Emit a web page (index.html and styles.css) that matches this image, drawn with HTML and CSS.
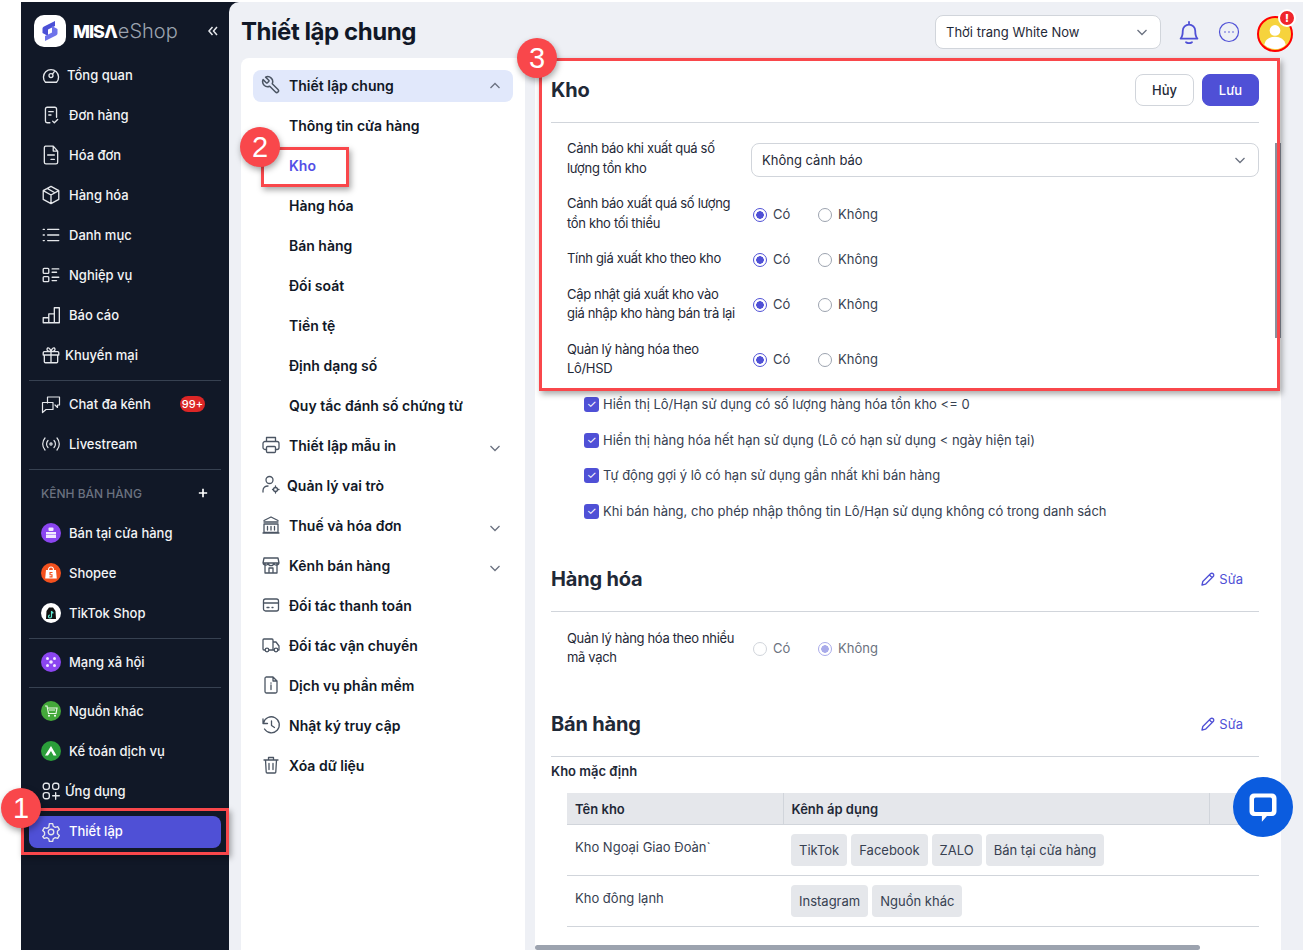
FILE: index.html
```html
<!DOCTYPE html>
<html lang="vi">
<head>
<meta charset="utf-8">
<title>MISA eShop - Thiết lập chung</title>
<link rel="stylesheet" href="styles.css">
</head>
<body>
<div class="app">
  <aside class="sidebar">
    <div class="brand">
      <div class="brand-mark">
        <svg viewBox="0 0 32 32"><path class="mark-a" d="M21 6 10 11.500c-1 .6-1.500 1.300-1.500 2.300V18l5.500 3v-6.500l7-3.500z"/><path class="mark-b" d="M11 26l11-5.500c1-.6 1.500-1.300 1.500-2.300V14L18 11v6.500L11 21z"/></svg>
      </div>
      <div class="brand-name"><b>MISΛ</b><span>eShop</span></div>
      <svg class="collapse" viewBox="0 0 12 12"><path d="M5.500 2 2 6l3.500 4M10 2 6.500 6l3.500 4"/></svg>
    </div>
    <nav>
      <a class="row gap-6"><svg class="i" viewBox="0 0 18 18"><path d="M4 15.500h10a6.800 6.800 0 1 0-10 0z"/><circle cx="9" cy="9.500" r="1.800"/><path d="M10.500 8l1.500-2"/></svg>Tổng quan</a>
      <a class="row"><svg class="i" viewBox="0 0 18 18"><path d="M8 16H5.500A1.500 1.500 0 0 1 4 14.500v-11A1.500 1.500 0 0 1 5.500 2h7A1.500 1.500 0 0 1 14 3.500V11M7 6h4M7 9h2M10.500 14.500l1.500 1.500 3-3"/></svg>Đơn hàng</a>
      <a class="row"><svg class="i" viewBox="0 0 18 18"><path d="M4 1h7l4 4.500v10a1.500 1.500 0 0 1-1.500 1.500h-9A1.500 1.500 0 0 1 3 15.500V2.500A1.500 1.500 0 0 1 4 1zM11 1v4.500h4M6 9h6M9 13h3"/></svg>Hóa đơn</a>
      <a class="row"><svg class="i" viewBox="0 0 18 18"><path d="M9 1.200 16 5v8l-7 3.800L2 13V5zM2 5l7 4 7-4M9 9v7.800M5.500 3.100 12.500 7"/></svg>Hàng hóa</a>
      <a class="row"><svg class="i" viewBox="0 0 18 18"><path d="M6 4h10M6 9h10M6 14h10M2 4h1M2 9h1M2 14h1"/></svg>Danh mục</a>
      <a class="row"><svg class="i" viewBox="0 0 18 18"><rect x="2" y="3" width="5" height="4.500" rx=".8"/><rect x="2" y="10.500" width="5" height="4.500" rx=".8"/><path d="M10 3.500h6M10 6.500h4M10 11h6M10 14h4"/></svg>Nghiệp vụ</a>
      <a class="row"><svg class="i" viewBox="0 0 18 18"><path d="M2 16h14.500V2.500h-4.500V16M7 16V8h5M2 16v-4.500h5"/></svg>Báo cáo</a>
      <a class="row gap-4"><svg class="i" viewBox="0 0 18 18"><path d="M3 6h12a1 1 0 0 1 1 1v2H2V7a1 1 0 0 1 1-1zM3 9v6a1 1 0 0 0 1 1h10a1 1 0 0 0 1-1V9M9 6v10M9 6C6 6 5 4.800 5.500 3.300 6.200 1.800 8.500 2.800 9 6zM9 6c3 0 4-1.200 3.500-2.700C11.800 1.800 9.500 2.800 9 6z"/></svg>Khuyến mại</a>
      <hr class="divider">
      <a class="row"><svg class="i" viewBox="0 0 20 20"><path d="M6.500 9V3h12v8h-2v2.500L14 11M1.500 8.500H12v7H5l-3.500 3z"/></svg>Chat đa kênh<span class="count">99+</span></a>
      <a class="row"><svg class="i" viewBox="0 0 20 18"><circle cx="10" cy="9" r="1.100"/><path d="M7 5.500a5 5 0 0 0 0 7M13 5.500a5 5 0 0 1 0 7M4 3a9 9 0 0 0 0 12M16 3a9 9 0 0 1 0 12"/></svg>Livestream</a>
      <hr class="divider">
      <div class="row section-label">KÊNH BÁN HÀNG<svg class="plus" viewBox="0 0 12 12"><path d="M6 1v10M1 6h10"/></svg></div>
      <a class="row"><span class="ch ch-store"><svg viewBox="0 0 20 20"><rect x="7.500" y="4.500" width="5" height="3.500" rx="1"/><path d="M5 9h10v2H5zM5 11.500h10v3.500H5z"/></svg></span>Bán tại cửa hàng</a>
      <a class="row"><span class="ch ch-shopee"><svg viewBox="0 0 20 20"><path d="M5 7h10l.8 8.500H4.200z"/><path class="stem" d="M7.500 7c0-4 5-4 5 0"/><path class="cut" d="M11.500 9.500H9v2.200h2v2.200H8.500"/></svg></span>Shopee</a>
      <a class="row"><span class="ch ch-tiktok"><svg viewBox="0 0 20 20"><path d="M5.500 8 8 4.500h4L14.500 8l.5 8H5z"/><path class="note" d="M10.500 8v5.500a1.500 1.500 0 1 1-1.500-1.500M10.500 8c.3 1.200 1 1.800 2 2"/></svg></span>TikTok Shop</a>
      <hr class="divider">
      <a class="row"><span class="ch ch-store"><svg viewBox="0 0 20 20"><circle cx="6.500" cy="6.500" r="1.500"/><circle cx="13.500" cy="6.500" r="1.500"/><circle cx="10" cy="10" r="1.800"/><circle cx="6.500" cy="13.500" r="1.500"/><circle cx="13.500" cy="13.500" r="1.500"/></svg></span>Mạng xã hội</a>
      <hr class="divider">
      <a class="row"><span class="ch ch-green"><svg viewBox="0 0 20 20"><path class="line" d="M4 5h2l1.500 7.500H15l1-5.500H6.500M8 9h6"/><circle cx="8" cy="14.800" r="1"/><circle cx="14" cy="14.800" r="1"/></svg></span>Nguồn khác</a>
      <a class="row"><span class="ch ch-green2"><svg viewBox="0 0 20 20"><path d="M10 5l5.500 9.500h-3L10 10l-3 4.500H4z"/></svg></span>Kế toán dịch vụ</a>
      <a class="row gap-4"><svg class="i" viewBox="0 0 18 18"><rect x="2" y="2" width="5.500" height="5.500" rx="2"/><rect x="10.500" y="2" width="5.500" height="5.500" rx="2"/><rect x="2" y="10.500" width="5.500" height="5.500" rx="2"/><path d="M13.200 10.500v6M10.500 13.300h6"/></svg>Ứng dụng</a>
      <a class="row active"><svg class="i" viewBox="0 0 18 18"><circle cx="9" cy="9" r="2.500"/><path d="M7.500 1.500h3l.5 2.300 1.800 1 2.200-.7 1.500 2.600-1.700 1.600v2.300l1.700 1.600-1.500 2.600-2.200-.7-1.800 1-.5 2.400h-3l-.5-2.400-1.800-1-2.200.7L1.500 13.200l1.700-1.600V9.300L1.500 7.700 3 5.100l2.200.7 1.800-1z"/></svg>Thiết lập</a>
    </nav>
  </aside>

  <main class="main">
    <header class="topbar">
      <h1>Thiết lập chung</h1>
      <div class="shop-select">Thời trang White Now<svg class="chev" viewBox="0 0 12 12"><path d="M1.500 4 6 8.500 10.500 4"/></svg></div>
      <svg class="top-i bell" viewBox="3.500 2 17 20"><path d="M5 17.500c1.500-1.500 1.800-3 1.800-6.500a5.200 5.200 0 0 1 10.400 0c0 3.500.3 5 1.800 6.500zM9.500 20.500c1.500 1 3.500 1 5 0M12 3.500V5"/></svg>
      <svg class="top-i more" viewBox="0 0 24 24"><circle cx="12" cy="12" r="9.500"/><path class="dots" d="M8 12h.01M12 12h.01M16 12h.01"/></svg>
      <div class="avatar"><svg viewBox="0 0 36 36"><circle cx="18" cy="14" r="6"/><path d="M6 30c1-6 6-9 12-9s11 3 12 9a17 17 0 0 1-24 0z"/></svg><span class="alert">!</span></div>
    </header>
    <div class="columns">
      <nav class="settings-nav">
        <a class="s-row open"><svg class="si wrench" viewBox="0 0 24 24"><path transform="matrix(-1 0 0 1 24 0)" d="M14.700 6.300a1 1 0 0 0 0 1.400l1.600 1.600a1 1 0 0 0 1.400 0l3.770-3.770a6 6 0 0 1-7.940 7.940l-6.910 6.910a2.120 2.120 0 0 1-3-3l6.910-6.910a6 6 0 0 1 7.940-7.940l-3.760 3.760z"/></svg>Thiết lập chung<svg class="chev up" viewBox="0 0 12 12"><path d="M1.500 8 6 3.500 10.500 8"/></svg></a>
        <a class="s-row sub">Thông tin cửa hàng</a>
        <a class="s-row sub current">Kho</a>
        <a class="s-row sub">Hàng hóa</a>
        <a class="s-row sub">Bán hàng</a>
        <a class="s-row sub">Đối soát</a>
        <a class="s-row sub">Tiền tệ</a>
        <a class="s-row sub">Định dạng số</a>
        <a class="s-row sub">Quy tắc đánh số chứng từ</a>
        <a class="s-row"><svg class="si" viewBox="0 0 20 20"><path d="M5.500 6.500V2.500h9v4M5.500 14.500H4A2 2 0 0 1 2 12.500V8.500a2 2 0 0 1 2-2h12a2 2 0 0 1 2 2v4a2 2 0 0 1-2 2h-1.500"/><rect x="5.500" y="11.500" width="9" height="6" rx="1"/></svg>Thiết lập mẫu in<svg class="chev" viewBox="0 0 12 12"><path d="M1.500 4 6 8.500 10.500 4"/></svg></a>
        <a class="s-row tight"><svg class="si" viewBox="0 0 20 20"><circle cx="8.500" cy="5" r="3.500"/><path d="M2 17v-1.500c0-3 2.500-4.500 5-4.500"/><circle cx="14.500" cy="14.500" r="2"/><path d="M14.500 11v1.500M14.500 16.500V18M11.500 14.500H12.500M16.500 14.500h1.500"/></svg>Quản lý vai trò</a>
        <a class="s-row"><svg class="si" viewBox="0 0 20 20"><path d="M3 9h14v8.500H3zM2 18h16M3 5.500 10 2l7 3.500M6.500 11.500v3.500M10 11.500v3.500M13.500 11.500v3.500M3 7h14"/></svg>Thuế và hóa đơn<svg class="chev" viewBox="0 0 12 12"><path d="M1.500 4 6 8.500 10.500 4"/></svg></a>
        <a class="s-row"><svg class="si" viewBox="0 0 20 20"><path d="M3 3h14l1 5H2zM4 8v10h12V8M8 18v-5h4v5M2 8a2.700 2.700 0 0 0 5.300 0 2.700 2.700 0 0 0 5.400 0 2.700 2.700 0 0 0 5.300 0"/></svg>Kênh bán hàng<svg class="chev" viewBox="0 0 12 12"><path d="M1.500 4 6 8.500 10.500 4"/></svg></a>
        <a class="s-row"><svg class="si" viewBox="0 0 20 20"><rect x="2.500" y="4" width="15" height="12" rx="2"/><path d="M2.500 8h15M6 12.500h2M11 12.500h1"/></svg>Đối tác thanh toán</a>
        <a class="s-row"><svg class="si" viewBox="0 0 20 20"><path d="M4 15H3a1 1 0 0 1-1-1V5a1 1 0 0 1 1-1h8a1 1 0 0 1 1 1v10H8M12 7h3l3 4v4h-1M12 15h1"/><circle cx="6" cy="15" r="1.800"/><circle cx="15" cy="15" r="1.800"/></svg>Đối tác vận chuyển</a>
        <a class="s-row"><svg class="si" viewBox="0 0 20 20"><path d="M5 2h7l4 4v10.500a1.500 1.500 0 0 1-1.500 1.500h-9A1.500 1.500 0 0 1 4 16.500v-13A1.500 1.500 0 0 1 5 2zM12 2v4h4M10 10v4.500M10 7.800v.4"/></svg>Dịch vụ phần mềm</a>
        <a class="s-row"><svg class="si" viewBox="0 0 20 20"><path d="M3.500 14a8 8 0 1 0-1-6M2 4v4.500h4.500M10.500 6v4.500l3 2"/></svg>Nhật ký truy cập</a>
        <a class="s-row"><svg class="si" viewBox="0 0 20 20"><path d="M3 5h14M7.500 5V2.500h5V5M4.500 5l.7 12a1 1 0 0 0 1 1h7.600a1 1 0 0 0 1-1l.7-12M8 8.500v6M12 8.500v6"/></svg>Xóa dữ liệu</a>
      </nav>

      <section class="panel">
        <div class="sec-head">
          <h2>Kho</h2>
          <div class="actions"><button class="btn">Hủy</button><button class="btn primary">Lưu</button></div>
        </div>
        <div class="form-rows">
          <div class="f-row"><label>Cảnh báo khi xuất quá số lượng tồn kho</label><div class="select">Không cảnh báo<svg class="chev" viewBox="0 0 12 12"><path d="M1.500 4 6 8.500 10.500 4"/></svg></div></div>
          <div class="f-row"><label>Cảnh báo xuất quá số lượng tồn kho tối thiểu</label><div class="radios"><span class="radio on">Có</span><span class="radio">Không</span></div></div>
          <div class="f-row"><label>Tính giá xuất kho theo kho</label><div class="radios"><span class="radio on">Có</span><span class="radio">Không</span></div></div>
          <div class="f-row snug"><label>Cập nhật giá xuất kho vào giá nhập kho hàng bán trả lại</label><div class="radios"><span class="radio on">Có</span><span class="radio">Không</span></div></div>
          <div class="f-row snug"><label>Quản lý hàng hóa theo Lô/HSD</label><div class="radios"><span class="radio on">Có</span><span class="radio">Không</span></div></div>
        </div>
        <div class="checks">
          <div class="check">Hiển thị Lô/Hạn sử dụng có số lượng hàng hóa tồn kho &lt;= 0</div>
          <div class="check">Hiển thị hàng hóa hết hạn sử dụng (Lô có hạn sử dụng &lt; ngày hiện tại)</div>
          <div class="check">Tự động gợi ý lô có hạn sử dụng gần nhất khi bán hàng</div>
          <div class="check">Khi bán hàng, cho phép nhập thông tin Lô/Hạn sử dụng không có trong danh sách</div>
        </div>

        <div class="sec-head sec-goods">
          <h2>Hàng hóa</h2>
          <a class="edit"><svg viewBox="0 0 16 16"><path d="M2 14l.8-3.500L10.500 2.800a1.500 1.500 0 0 1 2.700 2.700L5.500 13.200zM9.500 4l2.500 2.500"/></svg>Sửa</a>
        </div>
        <div class="form-rows">
          <div class="f-row snug"><label>Quản lý hàng hóa theo nhiều mã vạch</label><div class="radios disabled"><span class="radio">Có</span><span class="radio on">Không</span></div></div>
        </div>

        <div class="sec-head sec-sales">
          <h2>Bán hàng</h2>
          <a class="edit"><svg viewBox="0 0 16 16"><path d="M2 14l.8-3.500L10.500 2.800a1.500 1.500 0 0 1 2.700 2.700L5.500 13.200zM9.500 4l2.500 2.500"/></svg>Sửa</a>
        </div>
        <h3>Kho mặc định</h3>
        <table class="wh">
          <colgroup><col class="c1"><col class="c2"><col class="c3"></colgroup>
          <thead><tr><th>Tên kho</th><th>Kênh áp dụng</th><th></th></tr></thead>
          <tbody>
            <tr><td>Kho Ngoại Giao Đoàn`</td><td class="tags"><span>TikTok</span><span>Facebook</span><span>ZALO</span><span>Bán tại cửa hàng</span></td><td></td></tr>
            <tr><td>Kho đông lạnh</td><td class="tags"><span>Instagram</span><span>Nguồn khác</span></td><td></td></tr>
          </tbody>
        </table>
        <div class="vbar"></div>
        <div class="hbar"></div>
      </section>
    </div>
  </main>
</div>

<div class="mark mark-1"></div>
<div class="mark mark-2"></div>
<div class="mark mark-3"></div>
<div class="callout call-1">1</div>
<div class="callout call-2">2</div>
<div class="callout call-3">3</div>
<div class="chat"><svg viewBox="0 0 32 32"><path d="M8 4h16a4 4 0 0 1 4 4v12a4 4 0 0 1-4 4h-4.500L15 29v-5H8a4 4 0 0 1-4-4V8a4 4 0 0 1 4-4zM9.500 7.500A1.500 1.500 0 0 0 8 9v10a1.500 1.500 0 0 0 1.500 1.500h13A1.500 1.500 0 0 0 24 19V9a1.500 1.500 0 0 0-1.500-1.500z" fill-rule="evenodd"/></svg></div>
</body>
</html>
```

FILE: styles.css
```css
* { box-sizing: border-box; }
html, body { margin: 0; height: 100%; overflow: hidden; }
body { background: #fff; font-family: Inter, "Noto Sans", sans-serif; color: #111827; font-size: 13px; }
a { color: inherit; text-decoration: none; }
h1, h2, h3 { margin: 0; }

.app { display: flex; height: 948px; margin: 2px 0 2px 21px; background: #111827; }

/* Sidebar */
.sidebar { width: 208px; flex: none; color: #f3f4f6; font-weight: 500; }
.brand { height: 53px; display: flex; align-items: center; padding: 5px 10px 0 13px; }
.brand-mark { width: 32px; height: 32px; border-radius: 10px; background: #fff; flex: none; }
.brand-mark svg { width: 32px; height: 32px; display: block; }
.mark-a { fill: #4b50d6; }
.mark-b { fill: #6f74ea; }
.brand-name { margin-left: 7px; display: flex; align-items: baseline; font-size: 20px; line-height: 32px; }
.brand-name b { font-weight: 800; color: #fff; letter-spacing: -1px; font-size: 18px; }
.brand-name span { font-weight: 300; color: #9ca3af; margin-left: 1px; }
.collapse { width: 12px; height: 12px; margin-left: auto; fill: none; stroke: #e5e7eb; stroke-width: 1.500; }
.row { height: 40px; display: flex; align-items: center; margin: 0 8px; padding: 0 16px 0 12px; gap: 8px; }
.gap-6 { gap: 6px; }
.gap-4 { gap: 4px; }
.i { width: 20px; height: 20px; flex: none; fill: none; stroke: #e5e7eb; stroke-width: 1.200; stroke-linecap: round; stroke-linejoin: round; }
.divider { margin: 5px 8px 3px; border: 0; border-top: 1px solid #374151; }
.count { margin-left: auto; background: #dc2626; color: #fff; font-size: 11px; font-weight: 500; line-height: 16px; padding: 0 2px; border-radius: 8px; }
.section-label { color: #6b7280; font-size: 12px; }
.plus { width: 10px; height: 10px; margin-left: auto; margin-right: -3px; fill: none; stroke: #fff; stroke-width: 2; }
.ch { width: 20px; height: 20px; border-radius: 50%; flex: none; display: block; }
.ch svg { width: 20px; height: 20px; display: block; fill: #fff; }
.ch-store { background: #8b45f0; }
.ch-store svg { fill: #f1e8ff; }
.ch-shopee { background: #f4511e; }
.ch-shopee .cut { fill: none; stroke: #f4511e; stroke-width: 1.100; }
.ch-shopee .stem { fill: none; stroke: #fff; stroke-width: 1.100; }
.ch-tiktok { background: #fff; }
.ch-tiktok svg { fill: #111; }
.ch-tiktok .note { fill: none; stroke: #5eead4; stroke-width: 1.200; }
.ch-green { background: #44a83a; }
.ch-green .line { fill: none; stroke: #e8f7e4; stroke-width: 1.200; }
.ch-green2 { background: #2b9e3a; }
.active { height: 32px; margin-top: 5px; padding-bottom: 2px; background: #4f50d6; border-radius: 8px; color: #fff; }
.active .i { margin-top: 2px; }

/* Main */
.main { flex: 1; min-width: 0; display: flex; flex-direction: column; background: #eef0f5; border-radius: 10px 0 0 0; }
.topbar { height: 56px; flex: none; display: flex; align-items: center; padding: 4px 10px 0 12px; }
.topbar h1 { font-size: 24px; font-weight: 700; line-height: 32px; margin-right: auto; color: #111827; letter-spacing: -.45px; }
.shop-select { width: 226px; height: 34px; display: flex; align-items: center; justify-content: space-between; padding: 0 12px 0 10px; background: #fff; border: 1px solid #d1d5db; border-radius: 8px; color: #1f2937; }
.chev { width: 12px; height: 12px; flex: none; fill: none; stroke: #6b7280; stroke-width: 1.300; }
.top-i { width: 24px; height: 24px; fill: none; stroke: #4f50d6; stroke-width: 1.500; stroke-linecap: round; stroke-linejoin: round; }
.bell { margin-left: 16px; }
.more { margin-left: 16px; stroke-width: 1.200; }
.more .dots { stroke-width: 1.600; }
.avatar { position: relative; width: 36px; height: 36px; margin: 4px 0 0 16px; border-radius: 50%; border: 2px solid #f00; background: #f6d33c; }
.avatar svg { width: 32px; height: 32px; display: block; fill: #fff; border-radius: 50%; }
.alert { position: absolute; top: -9px; right: -5px; width: 18px; height: 18px; border-radius: 50%; background: #f0262c; border: 2px solid #fff; color: #fff; font-size: 11px; font-weight: 800; line-height: 14px; text-align: center; }

.columns { flex: 1; min-height: 0; display: flex; gap: 10px; padding: 0 22px 0 12px; }
.settings-nav { width: 284px; flex: none; background: #fff; border-radius: 8px 8px 0 0; padding: 8px 12px 0; font-size: 14px; font-weight: 600; color: #111827; }
.s-row { height: 40px; display: flex; align-items: center; padding: 0 12px 2px 8px; gap: 8px; }
.s-row.open { height: 32px; margin: 4px 0; background: #e1e8fb; border-radius: 8px; }
.s-row.sub { padding-left: 36px; }
.s-row.current { color: #5450e6; }
.s-row.tight { gap: 6px; }
.s-row .chev { margin-left: auto; margin-top: 6px; }
.s-row .chev.up { margin-top: 2px; }
.si { width: 20px; height: 20px; flex: none; fill: none; stroke: #4b5563; stroke-width: 1.300; stroke-linecap: round; stroke-linejoin: round; }
.si.wrench { stroke-width: 1.800; }

/* Panel */
.panel { position: relative; width: 746px; flex: none; background: #fff; padding: 0 22px 0 16px; overflow: hidden; }
.sec-head { height: 65px; display: flex; align-items: center; justify-content: space-between; border-bottom: 1px solid #d1d5db; }
h2 { font-size: 20px; font-weight: 700; color: #1f2937; line-height: 28px; letter-spacing: -.2px; }
.actions { display: flex; gap: 8px; }
.btn { height: 32px; width: 59px; font: 500 13px Inter, sans-serif; background: #fff; color: #1f2937; border: 1px solid #d1d5db; border-radius: 8px; padding: 0; }
.btn.primary { width: 57px; background: #4f50d6; border-color: #4f50d6; color: #fff; }
.form-rows { display: flex; flex-direction: column; gap: 15px; padding: 15px 0 0 16px; }
.f-row { display: grid; grid-template-columns: 184px 1fr; align-items: center; }
.f-row label { line-height: 20px; width: 172px; color: #1f2937; letter-spacing: -.33px; }
.f-row.snug { margin-top: 2px; }
.f-row.snug label { line-height: 19px; }
.select { height: 34px; margin-top: 4px; display: flex; align-items: center; justify-content: space-between; padding: 0 12px 0 10px; border: 1px solid #d1d5db; border-radius: 8px; color: #1f2937; }
.radios { display: flex; margin: 1px 0 -1px; }
.snug .radios { margin: 0; }
.radio { position: relative; width: 65px; padding-left: 22px; line-height: 20px; color: #374151; }
.radio::before { content: ""; position: absolute; left: 2px; top: 4px; width: 12px; height: 12px; border-radius: 50%; border: 1px solid #9ca3af; background: #fff; }
.radio.on::before { border-color: #4f50d6; background: radial-gradient(circle, #4f50d6 0 3.500px, #fff 4px); }
.disabled .radio { color: #6b7280; }
.disabled .radio::before { border-color: #d1d5db; }
.disabled .radio.on::before { border-color: #a9abea; background: radial-gradient(circle, #a9abea 0 3.500px, #fff 4px); }
.checks { margin: 9px 0 0 33px; }
.check { position: relative; height: 35.500px; line-height: 35px; padding-left: 19px; color: #374151; }
.check::before { content: "✓"; position: absolute; left: 0; top: 10px; width: 15px; height: 15px; border-radius: 3px; background: #4f50d6; color: #fff; font-size: 11px; line-height: 15px; text-align: center; }
.sec-goods { margin-top: 18px; }
.sec-sales { margin-top: 25px; }
.edit { display: flex; align-items: center; gap: 3px; margin-right: 16px; color: #4f50d6; }
.edit svg { width: 16px; height: 16px; fill: none; stroke: #4f50d6; stroke-width: 1.300; stroke-linejoin: round; }
h3 { font-size: 13px; font-weight: 600; line-height: 20px; margin-top: 4px; color: #1f2937; }
.wh { margin: 12px 0 0 16px; width: 692px; table-layout: fixed; border-collapse: collapse; color: #374151; }
.c1 { width: 216px; }
.c2 { width: 426px; }
.c3 { width: 50px; }
.wh th { height: 31px; padding: 1px 8px 0; background: #e5e7eb; text-align: left; font-weight: 600; color: #1f2937; border-right: 1px solid #d1d5db; }
.wh th:last-child { border-right: 0; }
.wh thead tr { border-bottom: 1px solid #d1d5db; }
.wh tbody tr { border-bottom: 1px solid #d1d5db; }
.wh td { height: 51px; padding: 12px 8px 0; vertical-align: top; line-height: 20px; }
.wh .tags { padding: 9px 8px 9px; }
.tags span { display: inline-block; height: 32px; line-height: 32px; padding: 0 8px; margin-right: 4px; background: #e5e7eb; border-radius: 4px; }
.vbar { position: absolute; top: 85px; right: 0; width: 6px; height: 195px; background: #8a909c; }
.hbar { position: absolute; left: 0; bottom: 0; width: 665px; height: 5px; background: #9ca3af; border-radius: 3px; }

/* Annotations laid over the screenshot */
.mark { position: absolute; border: 3px solid #f9474b; box-shadow: 2px 3px 6px rgba(0, 0, 0, .35); }
.mark-1 { left: 21px; top: 808px; width: 208px; height: 47px; }
.mark-2 { left: 261px; top: 147px; width: 88px; height: 40px; }
.mark-3 { left: 539px; top: 58px; width: 741px; height: 333px; }
.callout { position: absolute; width: 40px; height: 40px; border-radius: 50%; background: #f9474b; color: #fff; font-size: 29px; line-height: 40px; text-align: center; box-shadow: 1px 3px 6px rgba(0, 0, 0, .35); font-family: "Liberation Sans", sans-serif; }
.call-1 { left: 1px; top: 788px; }
.call-2 { left: 240px; top: 127px; }
.call-3 { left: 517px; top: 38px; }
.chat { position: absolute; left: 1233px; top: 777px; width: 60px; height: 60px; border-radius: 50%; background: #0b5cdf; display: flex; align-items: center; justify-content: center; }
.chat svg { width: 36px; height: 36px; fill: #fff; }
```
